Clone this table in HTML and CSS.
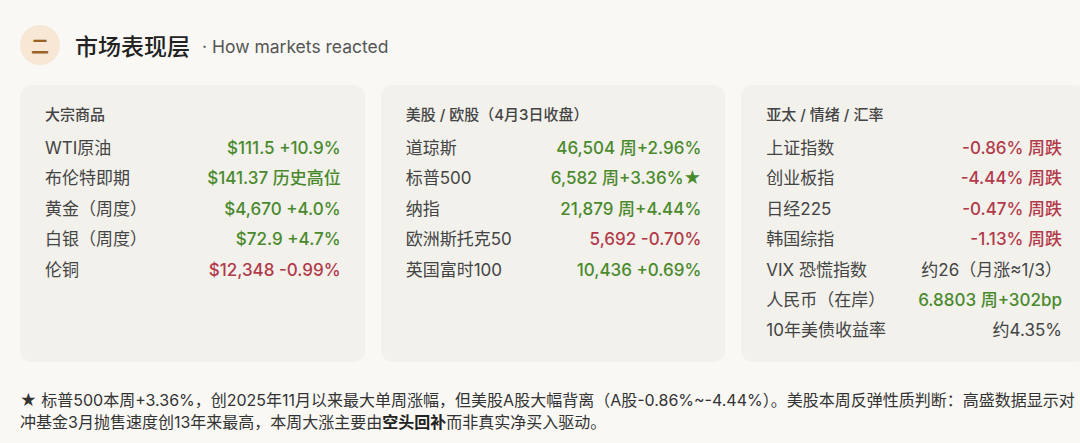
FILE: index.html
```html
<!DOCTYPE html>
<html lang="zh">
<head>
<meta charset="utf-8">
<link rel="stylesheet" href="styles.css">
</head>
<body>
<div class="page">
  <header class="sec-head">
    <div class="num">二</div>
    <h2 class="title">市场表现层</h2>
    <span class="sub">· How markets reacted</span>
  </header>

  <div class="cards">
    <section class="card">
      <div class="card-h">大宗商品</div>
      <div class="row"><span class="lbl">WTI原油</span><span class="val up">$111.5 +10.9%</span></div>
      <div class="row"><span class="lbl">布伦特即期</span><span class="val up">$141.37 历史高位</span></div>
      <div class="row"><span class="lbl">黄金（周度）</span><span class="val up">$4,670 +4.0%</span></div>
      <div class="row"><span class="lbl">白银（周度）</span><span class="val up">$72.9 +4.7%</span></div>
      <div class="row"><span class="lbl">伦铜</span><span class="val down">$12,348 -0.99%</span></div>
    </section>

    <section class="card">
      <div class="card-h">美股 / 欧股（4月3日收盘）</div>
      <div class="row"><span class="lbl">道琼斯</span><span class="val up">46,504 周+2.96%</span></div>
      <div class="row"><span class="lbl">标普500</span><span class="val up">6,582 周+3.36%★</span></div>
      <div class="row"><span class="lbl">纳指</span><span class="val up">21,879 周+4.44%</span></div>
      <div class="row"><span class="lbl">欧洲斯托克50</span><span class="val down">5,692 -0.70%</span></div>
      <div class="row"><span class="lbl">英国富时100</span><span class="val up">10,436 +0.69%</span></div>
    </section>

    <section class="card">
      <div class="card-h">亚太 / 情绪 / 汇率</div>
      <div class="row"><span class="lbl">上证指数</span><span class="val down">-0.86% 周跌</span></div>
      <div class="row"><span class="lbl">创业板指</span><span class="val down">-4.44% 周跌</span></div>
      <div class="row"><span class="lbl">日经225</span><span class="val down">-0.47% 周跌</span></div>
      <div class="row"><span class="lbl">韩国综指</span><span class="val down">-1.13% 周跌</span></div>
      <div class="row"><span class="lbl">VIX 恐慌指数</span><span class="val flat">约26（月涨≈1/3）</span></div>
      <div class="row"><span class="lbl">人民币（在岸）</span><span class="val up">6.8803 周+302bp</span></div>
      <div class="row"><span class="lbl">10年美债收益率</span><span class="val flat">约4.35%</span></div>
    </section>
  </div>

  <p class="note">★ 标普500本周+3.36%，创2025年11月以来最大单周涨幅，但美股A股大幅背离（A股-0.86%~-4.44%）。美股本周反弹性质判断：高盛数据显示对冲基金3月抛售速度创13年来最高，本周大涨主要由<b>空头回补</b>而非真实净买入驱动。</p>
</div>
</body>
</html>
```

FILE: styles.css
```css
html, body {
  margin: 0;
  padding: 0;
  background: #f9f8f4;
  overflow: hidden;
}

body {
  font-family: Inter, "Noto Sans CJK SC", sans-serif;
  color: #333;
}

.page {
  width: 1066px;
  padding: 25px 0 0 20px;
}

.sec-head {
  display: flex;
  align-items: center;
  height: 40px;
}

.num {
  width: 40px;
  height: 40px;
  border-radius: 50%;
  background: #f7e7d4;
  color: #9a6428;
  font-size: 18px;
  font-weight: 700;
  display: flex;
  align-items: center;
  justify-content: center;
  font-family: "Noto Sans CJK SC", sans-serif;
}

.title {
  margin: 0 0 0 15px;
  font-size: 23px;
  font-weight: 500;
  color: #222;
  font-family: "Noto Sans CJK SC", sans-serif;
  line-height: 40px;
}

.sub {
  margin-left: 12px;
  font-size: 17.5px;
  color: #555;
  margin-top: 3px;
}

.cards {
  margin-top: 20px;
  display: grid;
  grid-template-columns: repeat(3, 1fr);
  gap: 16px;
}

.card {
  background: #f2f1ec;
  border-radius: 12px;
  padding: 20px 24px 16px 25px;
}

.card-h {
  font-size: 15px;
  line-height: 20px;
  font-weight: 500;
  color: #444;
  margin-bottom: 8px;
}

.row {
  display: flex;
  justify-content: space-between;
  align-items: center;
  font-size: 17px;
  line-height: 30.4px;
}

.lbl {
  color: #444;
}

.val {
  font-weight: 500;
}

.up { color: #4a8a2c; }
.down { color: #b23a4a; }
.flat { color: #444; font-weight: 400; }

.note {
  margin: 27px 0 0 0;
  font-size: 16px;
  line-height: 22px;
  color: #333;
}

.note b {
  font-weight: 700;
  color: #222;
}
```
